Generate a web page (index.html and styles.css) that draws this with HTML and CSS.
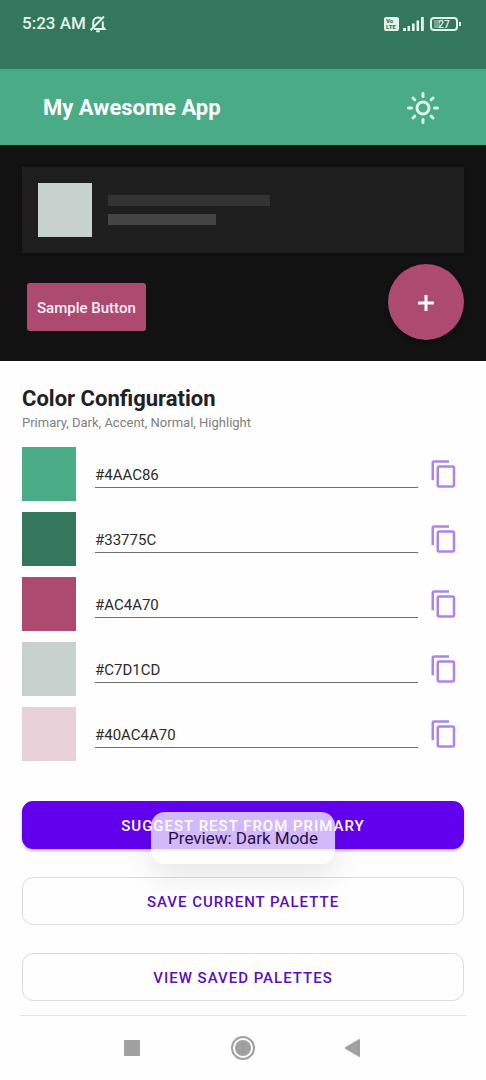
FILE: index.html
```html
<!DOCTYPE html>
<html lang="en">
<head>
<meta charset="utf-8">
<meta name="viewport" content="width=device-width, initial-scale=1">
<title>My Awesome App</title>
<link rel="stylesheet" href="styles.css">
</head>
<body>
<svg class="defs" aria-hidden="true">
  <symbol id="copy" viewBox="0 0 24 24"><path d="M16 1H4c-1.100 0-2 .9-2 2v14h2V3h12V1zm3 4H8c-1.100 0-2 .9-2 2v14c0 1.100.9 2 2 2h11c1.100 0 2-.9 2-2V7c0-1.100-.9-2-2-2zm0 16H8V7h11v14z"/></symbol>
</svg>

<div class="status-bar">
  <div class="status-group">
    <span class="clock">5:23 AM</span>
    <svg class="bell" viewBox="0 0 18 18" aria-hidden="true"><path d="M4.200 11.500V7.500C4.200 4.600 6.200 2.500 9 2.500c1.500 0 2.800.6 3.600 1.600M13.800 6.500v5.400l1.700 2H5M1.500 15.200 15 1.500M7.200 16.200h3.600"/></svg>
  </div>
  <div class="status-group status-right">
    <span class="volte"><span>Vo</span><span>LTE</span></span>
    <svg class="signal" viewBox="0 0 21 14" aria-hidden="true"><path d="M0 11h3v3H0zM4.500 9h2.600v5H4.500zM9 6.500h2.600V14H9zM13.500 3.500h2.600V14h-2.600zM18 0h2.800v14H18z"/></svg>
    <span class="battery">27</span>
  </div>
</div>

<header class="app-bar">
  <h1 class="app-title">My Awesome App</h1>
  <button class="icon-button" aria-label="Toggle preview mode">
    <svg class="sun" viewBox="0 0 34 34" aria-hidden="true"><circle cx="17" cy="17" r="6"/><path d="M17 2.500v3M17 28.500v3M2.500 17h3M28.500 17h3M7 7l1.800 1.800M25.200 25.200 27 27M27 7l-1.800 1.800M8.800 25.200 7 27"/></svg>
  </button>
</header>

<section class="preview" aria-label="Preview">
  <div class="card">
    <div class="thumb"></div>
    <div class="lines">
      <div class="line line-long"></div>
      <div class="line line-short"></div>
    </div>
  </div>
  <div class="preview-actions">
    <button class="sample-button">Sample Button</button>
    <button class="fab" aria-label="Add"><svg class="plus" viewBox="0 0 16 16" aria-hidden="true"><path d="M8 0v16M0 8h16"/></svg></button>
  </div>
</section>

<main class="config">
  <h2 class="config-title">Color Configuration</h2>
  <p class="config-sub">Primary, Dark, Accent, Normal, Highlight</p>
  <div class="rows">
    <div class="row"><div class="swatch primary"></div><input class="hex" aria-label="Primary" value="#4AAC86"><button class="copy-button" aria-label="Copy primary"><svg class="copy"><use href="#copy"/></svg></button></div>
    <div class="row"><div class="swatch dark"></div><input class="hex" aria-label="Dark" value="#33775C"><button class="copy-button" aria-label="Copy dark"><svg class="copy"><use href="#copy"/></svg></button></div>
    <div class="row"><div class="swatch accent"></div><input class="hex" aria-label="Accent" value="#AC4A70"><button class="copy-button" aria-label="Copy accent"><svg class="copy"><use href="#copy"/></svg></button></div>
    <div class="row"><div class="swatch normal"></div><input class="hex" aria-label="Normal" value="#C7D1CD"><button class="copy-button" aria-label="Copy normal"><svg class="copy"><use href="#copy"/></svg></button></div>
    <div class="row"><div class="swatch highlight"></div><input class="hex" aria-label="Highlight" value="#40AC4A70"><button class="copy-button" aria-label="Copy highlight"><svg class="copy"><use href="#copy"/></svg></button></div>
  </div>
  <div class="actions">
    <button class="action filled">SUGGEST REST FROM PRIMARY</button>
    <button class="action outlined">SAVE CURRENT PALETTE</button>
    <button class="action outlined">VIEW SAVED PALETTES</button>
    <div class="toast" role="status">Preview: Dark Mode</div>
  </div>
</main>

<nav class="nav-bar" aria-label="System">
  <button class="nav-button" aria-label="Recent apps"><svg class="nav-icon" viewBox="0 0 26 26"><rect x="4" y="5" width="16" height="16" rx="1"/></svg></button>
  <button class="nav-button" aria-label="Home"><svg class="nav-icon" viewBox="0 0 26 26"><circle cx="13" cy="13" r="8"/><circle class="ring" cx="13" cy="13" r="11"/></svg></button>
  <button class="nav-button" aria-label="Back"><svg class="nav-icon" viewBox="0 0 26 26"><path d="M20 4.500v17q0 .8-.8.400L5.200 13.700q-1-.7 0-1.400L19.200 4.100q.8-.4.800.4z"/></svg></button>
</nav>
</body>
</html>
```

FILE: styles.css
```css
* { box-sizing: border-box; }

body {
  margin: 0;
  background: #fefefe;
  color: #212121;
  font-family: Roboto, "Liberation Sans", sans-serif;
}

button {
  margin: 0;
  padding: 0;
  border: 0;
  background: none;
  font-family: inherit;
}

.defs { display: none; }

.status-bar {
  display: flex;
  justify-content: space-between;
  align-items: flex-start;
  height: 69px;
  padding: 13px 28px 0 22px;
  background: #33775c;
  color: #e4f5ec;
}

.status-group {
  display: flex;
  align-items: center;
  gap: 3px;
  height: 21px;
}

.status-right { gap: 4px; }

.clock { font-size: 17px; font-weight: 500; line-height: 21px; }

.bell {
  width: 18px;
  height: 18px;
  fill: none;
  stroke: #e4f5ec;
  stroke-width: 2;
}

.volte {
  display: flex;
  flex-direction: column;
  justify-content: center;
  width: 15px;
  height: 14px;
  padding: 0 2px;
  border-radius: 2px;
  background: #e4f5ec;
  color: #33775c;
  font-size: 6px;
  font-weight: 900;
  line-height: 6px;
}

.signal { width: 21px; height: 14px; fill: #e4f5ec; }

.battery {
  position: relative;
  width: 28px;
  height: 14px;
  margin: 0 0 0 2px;
  border: 2px solid #e4f5ec;
  border-radius: 4px;
  background: linear-gradient(90deg, #76a592 6px, transparent 6px) content-box;
  padding: 1px 2px;
  font-size: 10px;
  font-weight: 500;
  line-height: 9px;
  text-align: center;
}

.battery::after {
  content: "";
  position: absolute;
  top: 3px;
  right: -5px;
  width: 2px;
  height: 4px;
  background: #e4f5ec;
}

.app-bar {
  display: flex;
  justify-content: space-between;
  align-items: center;
  height: 76px;
  padding: 2px 46px 0 43px;
  background: #4aac86;
}

.app-title {
  margin: 0;
  color: #fff;
  font-size: 22px;
  font-weight: 700;
  line-height: 28px;
}

.icon-button { display: flex; }

.sun {
  width: 34px;
  height: 34px;
  fill: none;
  stroke: #dcf6e8;
  stroke-width: 3;
  stroke-linecap: round;
}

.preview {
  height: 216px;
  padding: 22px 22px 0;
  background: #121212;
}

.card {
  display: flex;
  align-items: center;
  gap: 16px;
  padding: 16px;
  background: #1e1e1e;
  box-shadow: 0 1px 3px #0f0f0f;
}

.thumb { width: 54px; height: 54px; background: #c7d1cd; }

.lines { display: flex; flex: 1; flex-direction: column; gap: 8px; }

.line { height: 11px; }
.line-long { width: 162px; background: #333; }
.line-short { width: 108px; background: #444; }

.preview-actions {
  display: flex;
  justify-content: space-between;
  align-items: center;
  padding: 11px 0 0 5px;
}

.sample-button {
  height: 48px;
  margin-top: 10px;
  padding: 2px 10px 0;
  border-radius: 3px;
  background: #ac4a70;
  color: #fdeef4;
  font-size: 15px;
  font-weight: 500;
}

.fab {
  display: flex;
  justify-content: center;
  align-items: center;
  width: 76px;
  height: 76px;
  padding-top: 2px;
  border-radius: 50%;
  background: #ac4a70;
  box-shadow: 0 2px 4px #0c0c0c;
}

.plus { width: 16px; height: 16px; stroke: #fff; stroke-width: 3; }

.config { padding: 24px 22px 14px; }

.config-title {
  margin: 0;
  font-size: 22px;
  font-weight: 700;
  line-height: 28px;
}

.config-sub {
  margin: 0;
  color: #808080;
  font-size: 13px;
  line-height: 20px;
}

.rows {
  display: flex;
  flex-direction: column;
  gap: 11px;
  margin-top: 14px;
}

.row { display: flex; align-items: center; }

.swatch { width: 54px; height: 54px; }
.primary { background: #4aac86; }
.dark { background: #33775c; }
.accent { background: #ac4a70; }
.normal { background: #c7d1cd; }
.highlight { background: #e8d1d9; }

.hex {
  flex: 1;
  min-width: 0;
  height: 27px;
  margin-left: 19px;
  padding: 2px 0 0;
  border: 0;
  border-bottom: 1px solid #6f6f6f;
  border-radius: 0;
  outline: 0;
  background: none;
  color: #2b2b2b;
  font-family: inherit;
  font-size: 15px;
}

.copy-button { display: flex; margin: 0 5px 0 11px; }

.copy { width: 30px; height: 30px; fill: #ad84e6; }

.actions {
  position: relative;
  display: flex;
  flex-direction: column;
  gap: 28px;
  margin-top: 40px;
}

.action {
  height: 48px;
  padding-top: 2px;
  border-radius: 11px;
  font-size: 15px;
  font-weight: 500;
  letter-spacing: 1px;
}

.filled {
  background: #6200ee;
  color: #fff;
  box-shadow: 0 2px 3px #00000040;
}

.outlined { border: 1px solid #dcdcdc; color: #5b0fc4; }

.toast {
  position: absolute;
  top: 11px;
  left: 50%;
  transform: translateX(-50%);
  padding: 15px 17px;
  border-radius: 14px;
  background: #ffffffb8;
  box-shadow: 0 12px 30px #00000018;
  color: #25104a;
  font-size: 17px;
  line-height: 22px;
  white-space: nowrap;
}

.nav-bar {
  display: flex;
  justify-content: center;
  gap: 84px;
  margin: 0 20px;
  padding: 19px 0;
  border-top: 1px solid #e2e2e2;
}

.nav-button { display: flex; }

.nav-icon { width: 26px; height: 26px; fill: #a0a0a0; }

.ring { fill: none; stroke: #a0a0a0; stroke-width: 2; }
```
